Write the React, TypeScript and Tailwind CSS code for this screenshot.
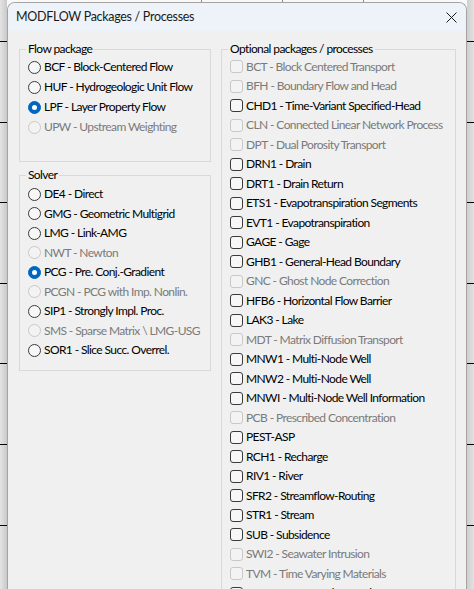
import React from "react";

type Item = { label: string; disabled?: boolean; checked?: boolean };

const flow: Item[] = [
  { label: "BCF - Block-Centered Flow" },
  { label: "HUF - Hydrogeologic Unit Flow" },
  { label: "LPF - Layer Property Flow", checked: true },
  { label: "UPW - Upstream Weighting", disabled: true },
];

const solver: Item[] = [
  { label: "DE4 - Direct" },
  { label: "GMG - Geometric Multigrid" },
  { label: "LMG - Link-AMG" },
  { label: "NWT - Newton", disabled: true },
  { label: "PCG - Pre. Conj.-Gradient", checked: true },
  { label: "PCGN - PCG with Imp. Nonlin.", disabled: true },
  { label: "SIP1 - Strongly Impl. Proc." },
  { label: "SMS - Sparse Matrix \\ LMG-USG", disabled: true },
  { label: "SOR1 - Slice Succ. Overrel." },
];

const optional: Item[] = [
  { label: "BCT - Block Centered Transport", disabled: true },
  { label: "BFH - Boundary Flow and Head", disabled: true },
  { label: "CHD1 - Time-Variant Specified-Head" },
  { label: "CLN - Connected Linear Network Process", disabled: true },
  { label: "DPT - Dual Porosity Transport", disabled: true },
  { label: "DRN1 - Drain" },
  { label: "DRT1 - Drain Return" },
  { label: "ETS1 - Evapotranspiration Segments" },
  { label: "EVT1 - Evapotranspiration" },
  { label: "GAGE - Gage" },
  { label: "GHB1 - General-Head Boundary" },
  { label: "GNC - Ghost Node Correction", disabled: true },
  { label: "HFB6 - Horizontal Flow Barrier" },
  { label: "LAK3 - Lake" },
  { label: "MDT - Matrix Diffusion Transport", disabled: true },
  { label: "MNW1 - Multi-Node Well" },
  { label: "MNW2 - Multi-Node Well" },
  { label: "MNWI - Multi-Node Well Information" },
  { label: "PCB - Prescribed Concentration", disabled: true },
  { label: "PEST-ASP" },
  { label: "RCH1 - Recharge" },
  { label: "RIV1 - River" },
  { label: "SFR2 - Streamflow-Routing" },
  { label: "STR1 - Stream" },
  { label: "SUB - Subsidence" },
  { label: "SWI2 - Seawater Intrusion", disabled: true },
  { label: "TVM - Time Varying Materials", disabled: true },
  { label: "UZF - Unsaturated Zone Flow" },
];

function Radio({ label, checked, disabled, tall }: Item & { tall?: boolean }) {
  const circle = checked
    ? "bg-[#0067c0] border-[#0067c0]"
    : disabled
    ? "bg-[#f3f3f3] border-[#c8c8c8]"
    : "bg-[#f7f7f7] border-[#3a3a3a]";
  return (
    <div className={`flex items-center gap-[3px] ${tall ? "h-[20px]" : "h-[19.5px]"}`}>
      <span className={`flex items-center justify-center w-[13px] h-[13px] rounded-full border shrink-0 ${circle}`}>
        {checked && <span className="w-[5px] h-[5px] rounded-full bg-white" />}
      </span>
      <span className={`whitespace-nowrap ${disabled ? "text-[#7a7a7a]" : "text-black"}`}>{label}</span>
    </div>
  );
}

function Check({ label, disabled }: Item) {
  return (
    <div className="flex items-center h-[19.5px] gap-[3px]">
      <span
        className={`w-[13px] h-[13px] rounded-[3px] border shrink-0 ${
          disabled ? "bg-[#f3f3f3] border-[#c8c8c8]" : "bg-[#f7f7f7] border-[#3a3a3a]"
        }`}
      />
      <span className={`whitespace-nowrap ${disabled ? "text-[#7a7a7a]" : "text-black"}`}>{label}</span>
    </div>
  );
}

function Group({ title, className, children }: { title: string; className: string; children: React.ReactNode }) {
  return (
    <fieldset className={`min-w-0 border border-[#d9d9d9] px-[8px] ${className}`}>
      <legend className="-ml-[2px] px-[2px] leading-[14px] text-black">{title}</legend>
      {children}
    </fieldset>
  );
}

function Strip({ side }: { side: "l" | "r" }) {
  const lines = [122, 202, 283, 363, 443, 525];
  return (
    <div
      className={`w-[7px] h-full flex flex-col shrink-0 ${
        side === "l"
          ? "bg-gradient-to-r from-[#e4e4e4] to-[#c9c9c9]"
          : "bg-gradient-to-r from-[#cfcfcf] to-[#e2e2e2]"
      }`}
    >
      <div className="h-[41px] shrink-0" />
      {lines.map((l) => (
        <div key={l} className="border-t border-black h-[80.6px] shrink-0" />
      ))}
      <div className="border-t border-black" />
    </div>
  );
}

export default function App() {
  return (
    <div className="flex w-[474px] h-[589px] overflow-hidden bg-[#f9f9f9] font-['Lato','Liberation_Sans',sans-serif] text-[12px]">
      <Strip side="l" />
      <div className="flex flex-col w-[460px] shrink-0">
        <div className="flex h-[2px] shrink-0">
          <div className="w-[194px]" />
          <div className="w-[81px] border-l border-[#8a8a8a]" />
          <div className="w-[81px] border-l border-[#8a8a8a]" />
          <div className="w-[81px] border-l border-[#8a8a8a]" />
        </div>
        <div className="flex-1 flex flex-col rounded-t-[8px] border border-b-0 border-[#a3a3a3] overflow-hidden bg-[#f0f0f0]">
          <div className="h-[28px] shrink-0 flex items-center justify-between pl-[8px] pr-[9px] bg-[#eef3f9]">
            <span className="text-[12.5px] tracking-[-0.3px] text-[#1a1a1a] leading-none">MODFLOW Packages / Processes</span>
            <svg width="11" height="11" viewBox="0 0 11 11">
              <path d="M0.5 0.5 L10.5 10.5 M10.5 0.5 L0.5 10.5" stroke="#1a1a1a" strokeWidth="1" />
            </svg>
          </div>
          <div className="flex pt-[11px] pl-[11px] pr-[10px] gap-[10px] tracking-[-0.6px]">
            <div className="flex flex-col w-[192px] gap-[6px] shrink-0">
              <Group title="Flow package" className="h-[120px] pt-[1px]">
                {flow.map((it) => (
                  <Radio key={it.label} {...it} tall />
                ))}
              </Group>
              <Group title="Solver" className="h-[203px] pt-[2.5px]">
                {solver.map((it) => (
                  <Radio key={it.label} {...it} />
                ))}
              </Group>
            </div>
            <Group title="Optional packages / processes" className="w-[235px] shrink-0 pt-[1px] overflow-hidden">
              {optional.map((it) => (
                <Check key={it.label} {...it} />
              ))}
            </Group>
          </div>
        </div>
      </div>
      <Strip side="r" />
    </div>
  );
}
